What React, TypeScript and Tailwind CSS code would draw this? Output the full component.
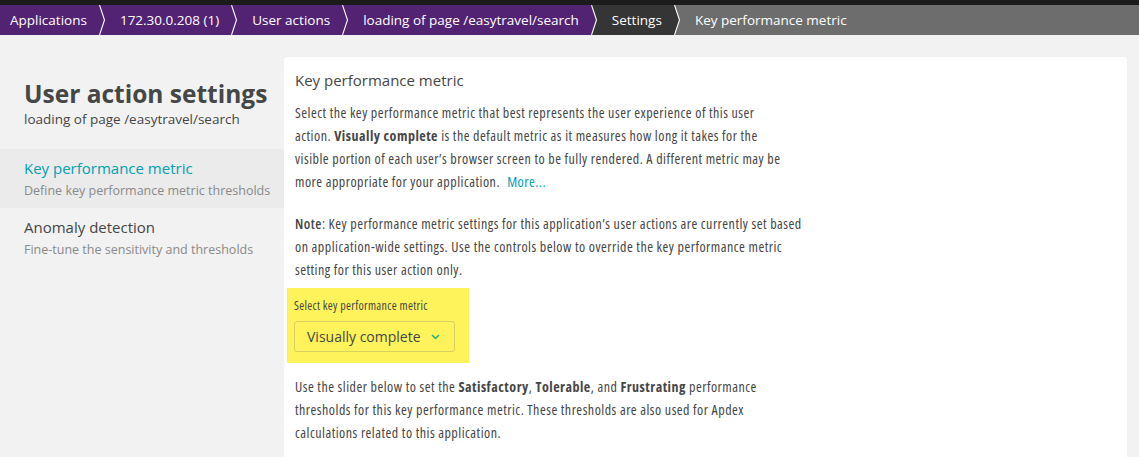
import React from "react";

const crumbs = [
  { label: "Applications", bg: "#522273" },
  { label: "172.30.0.208 (1)", bg: "#522273" },
  { label: "User actions", bg: "#522273" },
  { label: "loading of page /easytravel/search", bg: "#522273" },
  { label: "Settings", bg: "#353535" },
  { label: "Key performance metric", bg: "#6d6d6d" },
];

const Chevron = ({ from, to }: { from: string; to: string }) => (
  <svg width="6" height="30" viewBox="0 0 6 30" className="block shrink-0">
    <rect x="0" y="0" width="6" height="30" fill={to} />
    <polygon points="0,0 0.5,0 5.5,15 0.5,30 0,30" fill={from} />
    <polyline points="0.5,0 5.5,15 0.5,30" fill="none" stroke="#ffffff" strokeWidth="1.1" />
  </svg>
);

const Breadcrumbs = () => (
  <div className="flex h-[30px] items-stretch bg-[#6d6d6d]">
    {crumbs.map((c, i) => (
      <React.Fragment key={c.label}>
        <div
          className={`flex items-center whitespace-nowrap text-[13.5px] text-white ${i === 0 ? "pl-[10px]" : "pl-[15px]"} pr-[12px]`}
          style={{ backgroundColor: c.bg }}
        >
          {c.label}
        </div>
        {i < crumbs.length - 1 && <Chevron from={c.bg} to={crumbs[i + 1].bg} />}
      </React.Fragment>
    ))}
  </div>
);

const Sidebar = () => (
  <aside className="w-[284px] shrink-0 pt-[21px]">
    <div className="pl-[24px]">
      <h1 className="whitespace-nowrap text-[24.5px] font-bold leading-[32px] text-[#454646]">
        User action settings
      </h1>
      <p className="text-[13.5px] leading-[18px] text-[#454646]">loading of page /easytravel/search</p>
    </div>
    <nav className="mt-[21px]">
      <div className="bg-[#ebebeb] py-[8px] pl-[24px]">
        <div className="text-[15px] leading-[22px] text-[#00a1b2]">Key performance metric</div>
        <div className="mt-[3px] whitespace-nowrap text-[12.5px] leading-[18px] text-[#898989]">
          Define key performance metric thresholds
        </div>
      </div>
      <div className="py-[8px] pl-[24px]">
        <div className="text-[15px] leading-[22px] text-[#454646]">Anomaly detection</div>
        <div className="mt-[3px] whitespace-nowrap text-[12.5px] leading-[18px] text-[#898989]">
          Fine-tune the sensitivity and thresholds
        </div>
      </div>
    </nav>
  </aside>
);

export default function App() {
  return (
    <div
      className="h-[457px] overflow-hidden bg-[#f2f2f2] text-[#454646]"
      style={{ fontFamily: "'Open Sans', Lato, sans-serif" }}
    >
      <div className="h-[5px] bg-[#1b1b1b]" />
      <Breadcrumbs />
      <div className="flex pr-[12px] pt-[22px]">
        <Sidebar />
        <main className="flex-1 rounded-[3px] bg-white pl-[11px] pt-[10px]">
          <h2 className="text-[15px] leading-[26px]">Key performance metric</h2>
          <div className="text-[14px] leading-[23px] tracking-[0.5px] font-stretch-[75%]">
            <p className="mt-[8px] max-w-[496px]">
              Select the key performance metric that best represents the user experience of this user
              action. <b className="font-bold">Visually complete</b> is the default metric as it measures
              how long it takes for the visible portion of each user’s browser screen to be fully
              rendered. A different metric may be more appropriate for your application.{" "}
              <a className="ml-[4px] text-[#00a1b2]">More...</a>
            </p>
            <p className="mt-[19px] max-w-[511px]">
              <b className="font-semibold">Note</b>: Key performance metric settings for this
              application’s user actions are currently set based on application-wide settings. Use the
              controls below to override the key performance metric setting for this user action only.
            </p>
          </div>
          <div className="-ml-[8px] mt-[7px] w-[182px] bg-[#fff35c] px-[7px] pb-[11px] pt-[10px]">
            <div className="whitespace-nowrap text-[12px] leading-[16px] tracking-[0.3px] font-stretch-[75%]">
              Select key performance metric
            </div>
            <button className="mt-[7px] flex h-[31px] w-[161px] items-center justify-between rounded-[3px] border border-[#d8d060] pl-[12px] pr-[14px] text-[14px] text-[#454646]">
              <span>Visually complete</span>
              <svg width="9" height="6" viewBox="0 0 9 6">
                <polyline points="1,1 4.5,4.5 8,1" fill="none" stroke="#2ab06f" strokeWidth="1.5" />
              </svg>
            </button>
          </div>
          <p className="mt-[12px] max-w-[511px] text-[14px] leading-[23px] tracking-[0.5px] font-stretch-[75%]">
            Use the slider below to set the <b className="font-bold">Satisfactory</b>,{" "}
            <b className="font-bold">Tolerable</b>, and <b className="font-bold">Frustrating</b>{" "}
            performance thresholds for this key performance metric. These thresholds are also used for
            Apdex calculations related to this application.
          </p>
          <div className="ml-[335px] mt-[13px] h-[20px] w-[60px] border-t-2 border-[#00a1b2]" />
        </main>
      </div>
    </div>
  );
}
